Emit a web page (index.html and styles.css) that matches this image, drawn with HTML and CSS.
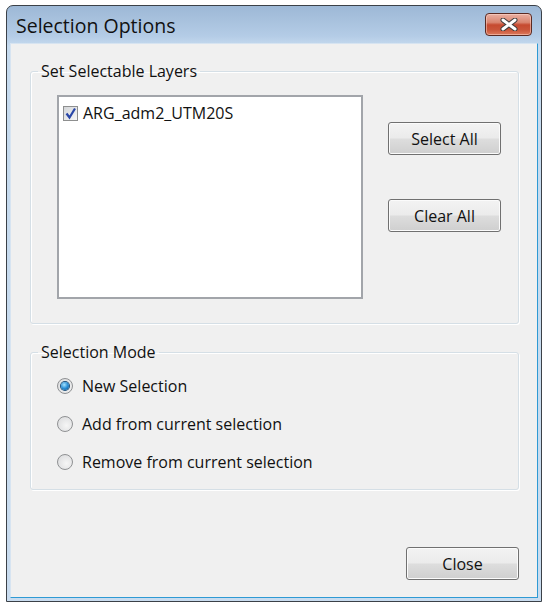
FILE: index.html
```html
<!DOCTYPE html>
<html lang="en">
<head>
    <meta charset="UTF-8">
    <meta name="viewport" content="width=device-width, initial-scale=1.0">
    <title>Selection Options</title>
    <link rel="stylesheet" href="styles.css">
</head>
<body>
    <div class="window">
        <div class="titlebar">
            <span class="title">Selection Options</span>
            <div class="close-x">
                <svg width="20" height="13" viewBox="0 0 20 13">
                    <path d="M4 2 L16 11 M16 2 L4 11" stroke="#3c3c3c" stroke-width="5" stroke-linecap="round"/>
                    <path d="M4 2 L16 11 M16 2 L4 11" stroke="#ffffff" stroke-width="3" stroke-linecap="round"/>
                </svg>
            </div>
        </div>
        <div class="client">
            <fieldset class="group layers">
                <legend>Set Selectable Layers</legend>
                <div class="layers-row">
                    <div class="listbox">
                        <div class="list-item">
                            <span class="check">
                                <svg width="15" height="15" viewBox="0 0 15 15">
                                    <path d="M3.5 7.5 L6.5 11.5 L12 2.5" fill="none" stroke="#2a47a8" stroke-width="2.2"/>
                                </svg>
                            </span>
                            <span>ARG_adm2_UTM20S</span>
                        </div>
                    </div>
                    <div class="side-buttons">
                        <button class="button">Select All</button>
                        <button class="button">Clear All</button>
                    </div>
                </div>
            </fieldset>

            <fieldset class="group mode">
                <legend>Selection Mode</legend>
                <div class="radio-row"><span class="radio checked"></span>New Selection</div>
                <div class="radio-row"><span class="radio"></span>Add from current selection</div>
                <div class="radio-row"><span class="radio"></span>Remove from current selection</div>
            </fieldset>

            <div class="footer">
                <button class="button">Close</button>
            </div>
        </div>
    </div>
</body>
</html>
```

FILE: styles.css
```css
body {
    margin: 0;
    padding: 0;
    background-color: #ffffff;
    font-family: "Open Sans", "Noto Sans", Arial, sans-serif;
    font-size: 16px;
    color: #111;
}
.window {
    margin: 5px 0 0 6px;
    width: 536px;
    height: 597px;
    box-sizing: border-box;
    border: 1px solid #3b4148;
    border-radius: 7px 7px 0 0;
    background: linear-gradient(#9db8d6, #b4cce6 30px, #c6dbef 40px, #c9dcef);
    padding: 0 3px 3px 3px;
    display: flex;
    flex-direction: column;
}
.titlebar {
    height: 37px;
    display: flex;
    justify-content: space-between;
    align-items: flex-start;
    padding: 6px 6px 0 6px;
    box-sizing: border-box;
}
.title {
    font-size: 19.5px;
    line-height: 28px;
    color: #111;
}
.close-x {
    width: 47px;
    height: 23px;
    box-sizing: border-box;
    border: 1px solid #5a2a22;
    border-radius: 4px;
    background: linear-gradient(#eab0a2, #d98570 40%, #c64a30 52%, #c9553a 75%, #dd7a5c);
    box-shadow: inset 0 0 0 1px rgba(255, 220, 210, 0.5);
    display: flex;
    justify-content: center;
    align-items: center;
    margin-top: 1px;
}
.client {
    flex: 1;
    background-color: #f0f0f0;
    border: 1px solid;
    border-color: #d7e4f1 #2e9ad4 #2e9ad4 #d7e4f1;
    padding: 0 18px 0 19px;
    display: flex;
    flex-direction: column;
}
.group {
    margin: 0;
    border: 1px solid #d5dfe6;
    border-radius: 3px;
    box-shadow: inset 1px 1px 0 #ffffff, 1px 1px 0 #ffffff;
    padding: 0 17px 24px 26px;
}
.group legend {
    padding: 0 3px;
    margin-left: -19px;
    line-height: 20px;
}
.layers {
    margin-top: 17px;
    padding-top: 14px;
}
.layers-row {
    display: flex;
    gap: 25px;
}
.listbox {
    width: 306px;
    height: 204px;
    box-sizing: border-box;
    background-color: #ffffff;
    border: 2px solid #a2a5aa;
    padding: 6px 4px;
}
.list-item {
    display: flex;
    align-items: center;
    gap: 5px;
    line-height: 20px;
}
.check {
    width: 15px;
    height: 15px;
    box-sizing: border-box;
    border: 1px solid #8e8f8f;
    background: linear-gradient(135deg, #d4d6d9, #f7f7f7);
    display: flex;
}
.check svg {
    margin: -1px;
}
.side-buttons {
    display: flex;
    flex-direction: column;
    gap: 44px;
    padding-top: 27px;
}
.button {
    width: 113px;
    height: 33px;
    font-family: inherit;
    font-size: 16px;
    color: #111;
    border: 1px solid #707070;
    border-radius: 3px;
    background: linear-gradient(#f3f3f3, #ebebeb 48%, #dddddd 52%, #cfcfcf);
    box-shadow: inset 0 0 0 1px #fbfbfb;
    padding: 0;
}
.mode {
    margin-top: 18px;
    padding-top: 5px;
    padding-bottom: 8px;
}
.radio-row {
    height: 38px;
    display: flex;
    align-items: center;
    gap: 9px;
}
.radio {
    width: 16px;
    height: 16px;
    box-sizing: border-box;
    border-radius: 50%;
    border: 1px solid #8f9193;
    background: radial-gradient(circle at 60% 60%, #f6f6f6, #d7d8da);
    display: flex;
    justify-content: center;
    align-items: center;
}
.radio.checked::after {
    content: "";
    width: 8px;
    height: 8px;
    border-radius: 50%;
    background: radial-gradient(circle at 40% 35%, #a6e3ff, #2b8fd6 50%, #0b4f8a);
    box-shadow: 0 0 0 1px #1c4f7a;
}
.footer {
    margin-top: auto;
    display: flex;
    justify-content: flex-end;
    padding-bottom: 17px;
}
```
